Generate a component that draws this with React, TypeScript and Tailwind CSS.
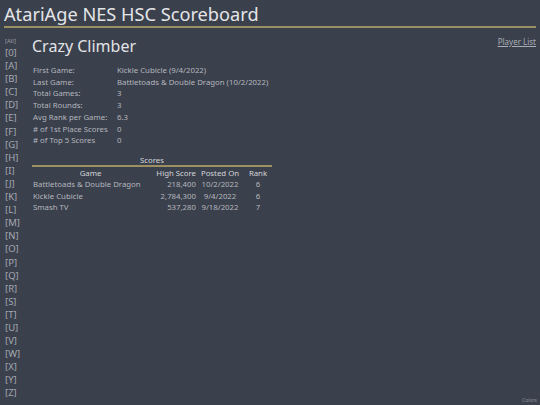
import React from "react";

const letters = ["0","A","B","C","D","E","F","G","H","I","J","K","L","M","N","O","P","Q","R","S","T","U","V","W","X","Y","Z"];

const info: [string, string][] = [
  ["First Game:", "Kickle Cubicle (9/4/2022)"],
  ["Last Game:", "Battletoads & Double Dragon (10/2/2022)"],
  ["Total Games:", "3"],
  ["Total Rounds:", "3"],
  ["Avg Rank per Game:", "6.3"],
  ["# of 1st Place Scores", "0"],
  ["# of Top 5 Scores", "0"],
];

const scores = [
  ["Battletoads & Double Dragon", "218,400", "10/2/2022", "6"],
  ["Kickle Cubicle", "2,784,300", "9/4/2022", "6"],
  ["Smash TV", "537,280", "9/18/2022", "7"],
];

export default function App() {
  return (
    <div
      className="w-[540px] h-[405px] bg-[#3a404c] text-[#b4b7be] relative overflow-hidden"
      style={{ fontFamily: '"Noto Sans", sans-serif' }}
    >
      <div className="px-[4px] pt-[3px]">
        <div className="text-[18.2px] leading-[22px] text-[#e4e5e8] border-b-[2px] border-[#9c8f62] pb-[1px]">
          AtariAge NES HSC Scoreboard
        </div>
      </div>
      <div className="flex">
        <div className="w-[30px] pl-[5px] pt-[9px] flex flex-col">
          <div className="text-[6px] leading-[9px] text-[#9a9ea7]">[All]</div>
          {letters.map((l) => (
            <div key={l} className="text-[9.5px] leading-[13.1px] text-[#a5a9b2]">[{l}]</div>
          ))}
        </div>
        <div className="flex-1 pl-[2px] pt-[8px] relative">
          <div className="text-[16px] leading-[20px] text-[#e2e3e6]">Crazy Climber</div>
          <div className="mt-[9px] pl-[1px] flex flex-col">
            {info.map(([k, v]) => (
              <div key={k} className="flex text-[7.8px] leading-[11.7px]">
                <div className="w-[84px]">{k}</div>
                <div>{v}</div>
              </div>
            ))}
          </div>
          <table className="mt-[8px] w-[240px] text-[7.8px] leading-[11.3px] border-collapse table-fixed">
            <caption className="text-[#d4d5d8] leading-[10px]">Scores</caption>
            <colgroup>
              <col className="w-[117px]" />
              <col className="w-[47px]" />
              <col className="w-[48px]" />
              <col className="w-[28px]" />
            </colgroup>
            <thead>
              <tr className="border-t-[2px] border-[#9c8f62] text-[#d4d5d8]">
                <th className="font-normal text-center pt-[1px]">Game</th>
                <th className="font-normal text-right pt-[1px]">High Score</th>
                <th className="font-normal text-center pt-[1px]">Posted On</th>
                <th className="font-normal text-center pt-[1px]">Rank</th>
              </tr>
            </thead>
            <tbody>
              {scores.map((r) => (
                <tr key={r[0]}>
                  <td className="pl-[1px] whitespace-nowrap">{r[0]}</td>
                  <td className="text-right">{r[1]}</td>
                  <td className="text-center">{r[2]}</td>
                  <td className="text-center">{r[3]}</td>
                </tr>
              ))}
            </tbody>
          </table>
        </div>
      </div>
      <a className="absolute right-[4px] top-[36px] text-[8px] underline text-[#a9adb5]">Player List</a>
      <div className="absolute right-[3px] bottom-[1px] text-[5px] text-[#8f939c]">Colors</div>
    </div>
  );
}
